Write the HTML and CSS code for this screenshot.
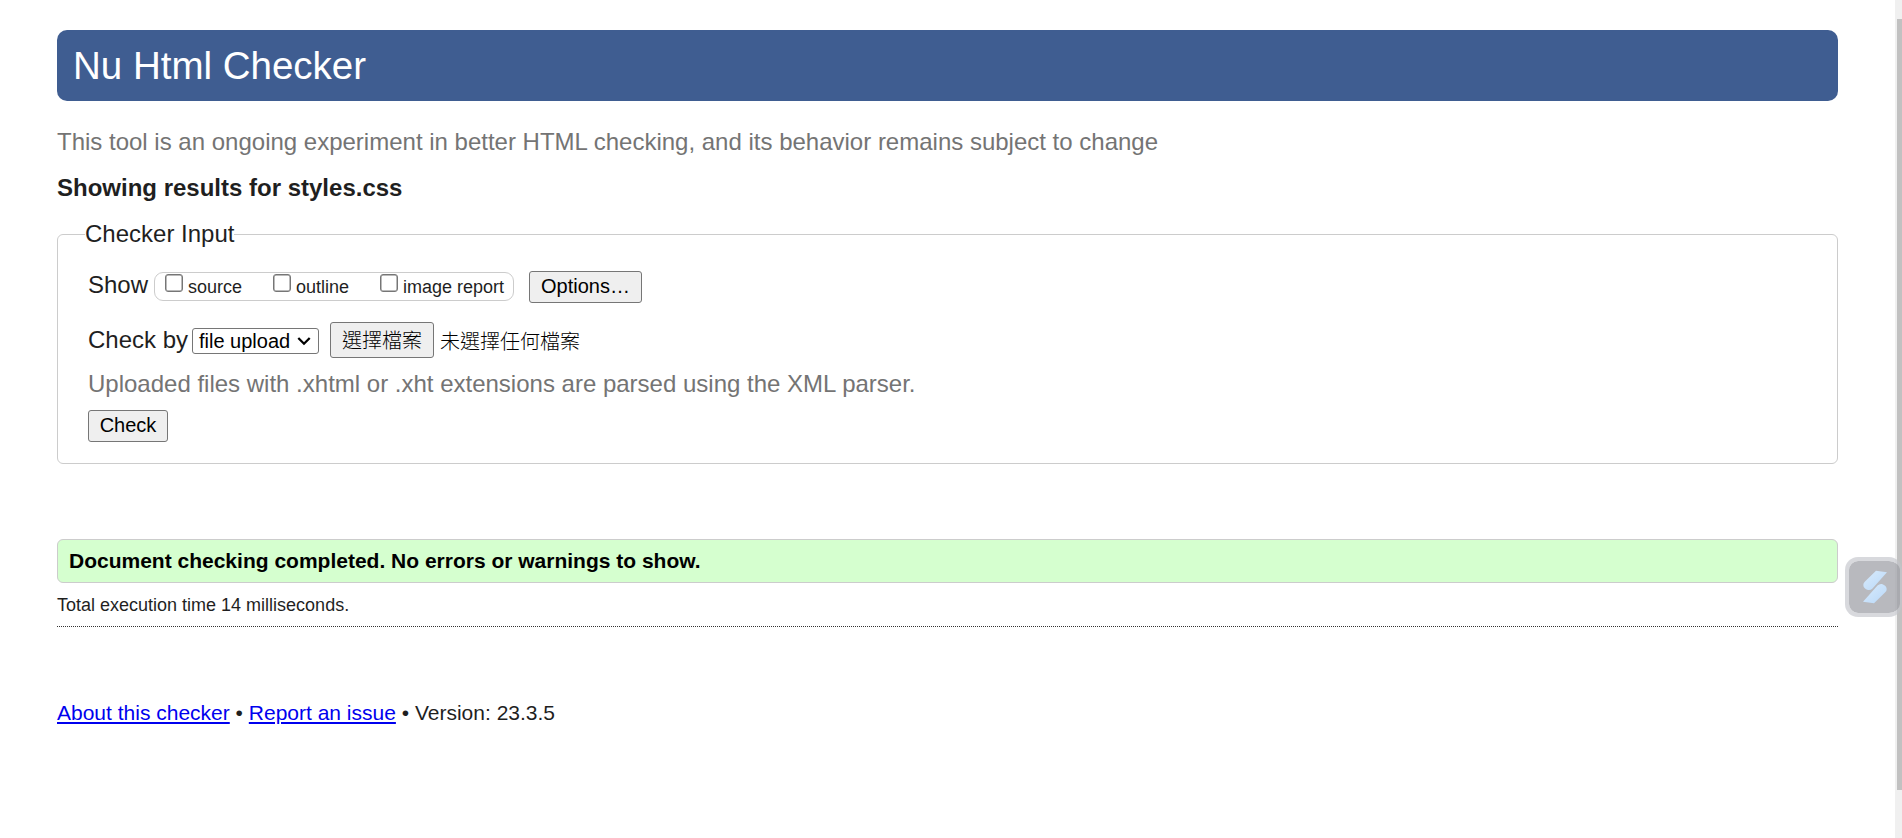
FILE: index.html
```
<!DOCTYPE html>
<html lang="en">
<head>
<meta charset="utf-8">
<title>Nu Html Checker</title>
<link rel="stylesheet" href="styles.css">
</head>
<body>
<main class="page">
  <h1 class="banner">Nu Html Checker</h1>
  <p class="intro"><span>This tool is an ongoing experiment in better HTML checking, and its behavior remains subject to change</span></p>
  <h2 class="heading">Showing results for styles.css</h2>
  <fieldset class="input">
    <legend class="legend">Checker Input</legend>
    <div class="row show">
      <span class="label">Show</span>
      <div class="pill">
        <label class="option"><input type="checkbox" class="box">source</label>
        <label class="option"><input type="checkbox" class="box">outline</label>
        <label class="option"><input type="checkbox" class="box">image report</label>
      </div>
      <button class="btn options">Options…</button>
    </div>
    <div class="row by">
      <span class="label">Check by</span>
      <div class="select">file upload<svg class="chevron" width="14" height="10" viewBox="0 0 14 10"><path d="M1.3 2 7 7.7 12.7 2" fill="none" stroke="#000" stroke-width="2.3"/></svg></div>
      <button class="btn file" lang="zh-Hant">選擇檔案</button>
      <span class="filename" lang="zh-Hant">未選擇任何檔案</span>
    </div>
    <p class="hint">Uploaded files with .xhtml or .xht extensions are parsed using the XML parser.</p>
    <button class="btn check">Check</button>
  </fieldset>
  <p class="success"><span>Document checking completed. No errors or warnings to show.</span></p>
  <p class="timing"><span>Total execution time 14 milliseconds.</span></p>
  <footer class="footer"><a href="#">About this checker</a> • <a href="#">Report an issue</a> • <span>Version: 23.3.5</span></footer>
</main>
<div class="scrollbar"><div class="thumb"></div></div>
<div class="widget">
  <svg width="26" height="34" viewBox="0 0 26 34">
    <defs><linearGradient id="g" x1="0" y1="0" x2="1" y2="1"><stop offset="0" stop-color="#d9ebfc"/><stop offset="1" stop-color="#b9d8f8"/></linearGradient></defs>
    <path d="M14 .8 25 2.3 10.500 18.500Q8.500 20.500 6 20Q1.500 18.500 1.300 15Q1.200 13 3 11.500Z" fill="url(#g)"/>
    <path d="M12 33.200 1 31.700 15.500 15.500Q17.500 13.500 20 14Q24.500 15.500 24.700 19Q24.800 21 23 22.500Z" fill="url(#g)"/>
  </svg>
</div>
</body>
</html>
```
FILE: styles.css
```
* { box-sizing: border-box; }
body {
  margin: 0;
  height: 838px;
  overflow: hidden;
  background: #fff;
  color: #1f1f1f;
  font: 24px/28px "Liberation Sans", Arial, "Noto Sans CJK TC", sans-serif;
}
h1, h2, p { margin: 0; }
.page { padding: 30px 64px 0 57px; }
.banner {
  height: 71px;
  padding: 1px 0 0 16px;
  border-radius: 10px;
  background: #3f5d91;
  color: #fff;
  font-size: 38.5px;
  font-weight: 400;
  line-height: 70px;
}
.intro { margin-top: 27px; color: #747474; }
.heading { margin-top: 18px; font-size: 24px; line-height: 28px; }
.input {
  min-width: 0;
  height: 244px;
  margin: 18px 0 0;
  padding: 0 29px 0 30px;
  border: 1px solid #ccc;
  border-radius: 6px;
}
.legend { margin-left: -3px; padding: 0; }
.row { display: flex; align-items: center; white-space: nowrap; }
.show { height: 32px; margin-top: 23px; }
.show .label { width: 66px; padding-bottom: 4px; }
.pill {
  display: flex;
  align-items: center;
  width: 360px;
  height: 29px;
  margin-bottom: 1px;
  padding-left: 10px;
  border: 1px solid #ccc;
  border-radius: 9px;
  font-size: 18px;
}
.option { display: flex; align-items: center; width: 108px; height: 27px; }
.option + .option + .option { width: auto; margin-left: -1px; }
.box {
  appearance: none;
  width: 18px;
  height: 18px;
  margin: 0 5px 8px 0;
  border: 1px solid #767676;
  box-shadow: inset 0 0 0 .5px #767676;
  border-radius: 3px;
  background: #fff;
}
.btn {
  height: 32px;
  padding: 0 0 1px;
  border: 1px solid #767676;
  border-radius: 3px;
  background: #efefef;
  color: #000;
  font: 20px/29px "Liberation Sans", Arial, "Noto Sans CJK TC", sans-serif;
}
.options { width: 113px; margin-left: 15px; }
.by { height: 36px; margin-top: 19px; }
.by .label { width: 104px; }
.select {
  display: flex;
  align-items: center;
  justify-content: space-between;
  width: 127px;
  height: 26px;
  margin-top: 2px;
  padding: 0 7px 0 6px;
  border: 1px solid #767676;
  border-radius: 3px;
  color: #000;
  font-size: 20px;
}
.file { width: 104px; height: 36px; margin-left: 11px; padding: 3px 0 0; font-weight: 300; }
.filename { margin-left: 6px; padding-top: 4px; color: #000; font-size: 20px; font-weight: 300; }
.hint { margin-top: 12px; color: #747474; }
.check { display: block; width: 80px; margin-top: 12px; }
.success {
  height: 44px;
  margin-top: 75px;
  padding-left: 11px;
  border: 1px solid #ccc;
  border-radius: 6px;
  background: #d5ffcf;
  color: #000;
  font-size: 21px;
  font-weight: 700;
  line-height: 42px;
}
.timing {
  height: 44px;
  border-bottom: 1px dotted #333;
  font-size: 18px;
  line-height: 44px;
}
.footer { margin-top: 72px; font-size: 21px; }
.footer a { color: #0000ee; text-decoration: underline; text-decoration-thickness: 2px; text-underline-offset: 2px; }
.scrollbar {
  position: absolute;
  top: 0;
  right: 0;
  width: 7px;
  height: 838px;
  padding: 19px 0 0 2px;
  background: #f0f0f0;
}
.thumb { height: 771px; background: #c1c1c1; }
.widget {
  position: absolute;
  top: 557px;
  right: 0;
  display: flex;
  align-items: center;
  width: 57px;
  height: 60px;
  padding-left: 13px;
  border: 4px solid rgba(195, 196, 203, .65);
  border-right-width: 2px;
  border-radius: 13px;
  background: rgba(160, 161, 168, .75);
  background-clip: padding-box;
}
```
